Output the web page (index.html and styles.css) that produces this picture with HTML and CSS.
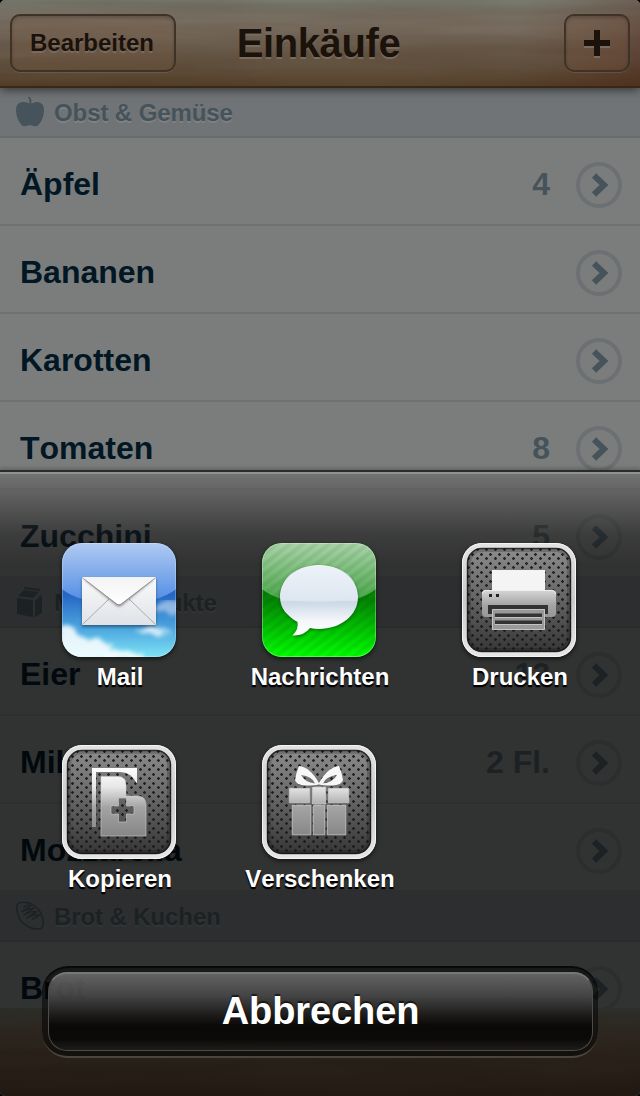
FILE: index.html
```html
<!DOCTYPE html>
<html lang="de">
<head>
<meta charset="utf-8">
<title>Einkäufe</title>
<link rel="stylesheet" href="styles.css">
</head>
<body>
<svg class="defs" width="0" height="0" aria-hidden="true">
  <defs>
    <filter id="grain" x="0" y="0" width="100%" height="100%" color-interpolation-filters="sRGB">
      <feTurbulence type="fractalNoise" baseFrequency="0.004 0.05" numOctaves="3" seed="8"/>
      <feColorMatrix values="0 0 0 0 0.2  0 0 0 0 0.1  0 0 0 0 0.02  1.4 0 0 0 -0.45"/>
    </filter>
    <linearGradient id="frame" x1="0" y1="0" x2="0" y2="1"><stop offset="0" stop-color="#e2e2e2"/><stop offset=".5" stop-color="#cbcbcb"/><stop offset="1" stop-color="#e6e6e6"/></linearGradient>
    <linearGradient id="plate" x1="0" y1="0" x2="0" y2="1"><stop offset="0" stop-color="#8c8c8c"/><stop offset=".5" stop-color="#636363"/><stop offset="1" stop-color="#363636"/></linearGradient>
    <pattern id="mesh" width="9" height="9" patternUnits="userSpaceOnUse">
      <path d="M0 2h3v1H0zM1 1h1v3H1zM5 6h3v1H5zM6 5h1v3H6z" fill="#181818" opacity=".9"/>
      <path d="M0 3h1v1H0zM2 3h1v1H2zM5 7h1v1H5zM7 7h1v1H7zM0 1h1v1H0zM2 1h1v1H2zM5 5h1v1H5zM7 5h1v1H7z" fill="#181818" opacity=".25"/>
    </pattern>
    <linearGradient id="silver" gradientUnits="userSpaceOnUse" x1="0" y1="22" x2="0" y2="92"><stop offset="0" stop-color="#fff"/><stop offset=".28" stop-color="#e8e8e8"/><stop offset=".58" stop-color="#a3a3a3"/><stop offset="1" stop-color="#858585"/></linearGradient>
    <linearGradient id="sky" x1="0" y1="0" x2="0" y2="1"><stop offset="0" stop-color="#3169cc"/><stop offset=".45" stop-color="#2566c4"/><stop offset=".75" stop-color="#4ca6df"/><stop offset="1" stop-color="#7fe3f4"/></linearGradient>
    <linearGradient id="skygloss" x1="0" y1="0" x2="0" y2="1"><stop offset="0" stop-color="#b1caf2"/><stop offset="1" stop-color="#4f8ce4"/></linearGradient>
    <linearGradient id="flap" x1="0" y1="0" x2="0" y2="1"><stop offset="0" stop-color="#f3f3f3"/><stop offset="1" stop-color="#fff"/></linearGradient>
    <linearGradient id="env" x1="0" y1="0" x2="0" y2="1"><stop offset="0" stop-color="#fafafa"/><stop offset="1" stop-color="#dfe3e8"/></linearGradient>
    <linearGradient id="green" x1="0" y1="0" x2="0" y2="1"><stop offset="0" stop-color="#057a05"/><stop offset=".5" stop-color="#048404"/><stop offset="1" stop-color="#00ff00"/></linearGradient>
    <linearGradient id="greengloss" x1="0" y1="0" x2="0" y2="1"><stop offset="0" stop-color="#a9d3a8"/><stop offset="1" stop-color="#45a545"/></linearGradient>
    <pattern id="stripes" width="8" height="8" patternUnits="userSpaceOnUse" patternTransform="rotate(-38)"><path d="M0 2h8" stroke="#000" stroke-opacity=".06" stroke-width="4"/></pattern>
    <linearGradient id="bubble" x1="0" y1="0" x2="0" y2="1"><stop offset="0" stop-color="#fff"/><stop offset=".5" stop-color="#dde6f0"/><stop offset=".52" stop-color="#cbd8e6"/><stop offset=".8" stop-color="#f5f7fb"/><stop offset="1" stop-color="#fff"/></linearGradient>
    <clipPath id="tile"><rect width="114" height="114" rx="20"/></clipPath>
    <filter id="soft"><feGaussianBlur stdDeviation="1.6"/></filter>
    <filter id="cloud" x="0" y="0" width="100%" height="100%" color-interpolation-filters="sRGB">
      <feTurbulence type="fractalNoise" baseFrequency=".07 .09" numOctaves="4" seed="3" result="n"/>
      <feDisplacementMap in="SourceGraphic" in2="n" scale="20" xChannelSelector="R" yChannelSelector="G"/>
      <feGaussianBlur stdDeviation="2"/>
    </filter>
    <symbol id="next" viewBox="0 0 46 46"><circle cx="23" cy="23" r="21" fill="none" stroke="#6c7073" stroke-width="4"/><path d="M18 13.500 28 23 18 32.500" fill="none" stroke="#46535b" stroke-width="6"/></symbol>
    <symbol id="metal" viewBox="0 0 114 114">
      <rect width="114" height="114" rx="20" fill="url(#frame)"/>
      <rect x=".5" y=".5" width="113" height="113" rx="19.500" fill="none" stroke="#f4f4f4"/>
      <rect x="5" y="5" width="104" height="104" rx="15" fill="url(#plate)"/>
      <rect x="5" y="5" width="104" height="104" rx="15" fill="url(#mesh)"/>
      <rect x="5.500" y="5.500" width="103" height="103" rx="14.500" fill="none" stroke="#111" stroke-opacity=".8" stroke-width="1.500"/>
      <rect x="7.500" y="7.500" width="99" height="99" rx="12.500" fill="none" stroke="#111" stroke-opacity=".22" stroke-width="3"/>
    </symbol>
  </defs>
</svg>

<div class="screen">
  <header class="bar">
    <svg class="wood" width="640" height="86"><rect width="640" height="86" filter="url(#grain)"/></svg>
    <button class="barbtn edit">Bearbeiten</button>
    <h1 class="title">Einkäufe</h1>
    <button class="barbtn add" aria-label="Hinzufügen"><svg width="28" height="30" viewBox="0 0 28 30"><path d="M1 15h26v4H1zM11 27h6v2h-6z" fill="#7a6d5f"/><path d="M11 1h6v10h10v6H17v10h-6V17H1v-6h10z" fill="#1b120b"/></svg></button>
  </header>

  <main class="list">
    <h2 class="section"><svg class="sicon" width="28" height="32" viewBox="0 0 28 32"><path d="M12 1l2 0q2 3 1.400 6.500Q19 5.500 22 6q6 1 6 8 0 9-6 15.500-3 1.500-8-.5-5 2-8 .500Q0 23 0 14 0 7 6 6q4-.5 7.500 1.500Q14 4 12 1z" fill="#46535a"/></svg><span>Obst &amp; Gemüse</span></h2>
    <div class="row"><span class="name">Äpfel</span><span class="qty">4</span><svg class="next"><use href="#next"/></svg></div>
    <div class="row"><span class="name">Bananen</span><svg class="next"><use href="#next"/></svg></div>
    <div class="row"><span class="name">Karotten</span><svg class="next"><use href="#next"/></svg></div>
    <div class="row"><span class="name">Tomaten</span><span class="qty">8</span><svg class="next"><use href="#next"/></svg></div>
    <div class="row"><span class="name">Zucchini</span><span class="qty">5</span><svg class="next"><use href="#next"/></svg></div>
    <h2 class="section"><svg class="sicon" width="28" height="32" viewBox="0 0 28 32"><path d="M1 12 17 14V31L1 28zM19 14l7-4v17l-7 4zM2 10 8 4 23 6 17 12zM25 8l1 1-6 4zM8 1l16 2v2L8 3z" fill="#46535a"/></svg><span>Milchprodukte</span></h2>
    <div class="row"><span class="name">Eier</span><span class="qty">12</span><svg class="next"><use href="#next"/></svg></div>
    <div class="row"><span class="name">Milch</span><span class="qty">2 Fl.</span><svg class="next"><use href="#next"/></svg></div>
    <div class="row"><span class="name">Mozzarella</span><svg class="next"><use href="#next"/></svg></div>
    <h2 class="section"><svg class="sicon" width="28" height="32" viewBox="0 0 28 32"><g fill="none" stroke="#46535a" stroke-width="1.500" stroke-linejoin="round"><path d="M1 8Q0 3 5 2.500 15 1 22 9q6 7 5 16 0 4-5 4Q12 29 5 21 1 15 1 8z"/><path d="M7 8q4-4 8-2.500L6 11.500q6-3 12-3.500L8 15q6-4 13-3.500L11 18q6-4 13-3l-8 4.500"/></g></svg><span>Brot &amp; Kuchen</span></h2>
    <div class="row"><span class="name">Brot</span><svg class="next"><use href="#next"/></svg></div>
  </main>
  <footer class="toolbar"><svg class="wood" width="640" height="88"><rect width="640" height="88" filter="url(#grain)"/></svg></footer>

  <section class="sheet">
    <div class="actions">
      <div class="action">
        <svg class="tile" viewBox="0 0 114 114"><g clip-path="url(#tile)">
          <rect width="114" height="114" fill="url(#sky)"/>
          <g filter="url(#cloud)" fill="#fff"><path d="M-5 86Q4 84 14 91q12 2 20 7 18 0 28 8 8 3 18 5v8H-5z" opacity=".85"/><ellipse cx="106" cy="65" rx="12" ry="8" opacity=".45"/><ellipse cx="93" cy="87" rx="17" ry="4" opacity=".75"/></g>
          <path d="M0 0h114v46Q98 60 57 60T0 46z" fill="url(#skygloss)"/></g>
          <rect x="20" y="36" width="74" height="48" fill="#123" opacity=".5" filter="url(#soft)"/>
          <rect x="20" y="34" width="74" height="48" fill="url(#env)"/>
          <path d="M20.500 81.500 47 56M93.500 81.500 67 56" stroke="#aaa" fill="none"/>
          <path d="M22 36 54 62q3 3 6 0L92 36z" fill="#333" opacity=".55" filter="url(#soft)"/>
          <path d="M20 34 54.500 60.500q2.500 2 5 0L94 34z" fill="url(#flap)"/><path d="M20 34.500 54.500 61q2.500 2 5 0L94 34.500" stroke="#888" stroke-width=".8" fill="none"/>
          <rect x=".5" y=".5" width="113" height="113" rx="19.500" fill="none" stroke="#fff" stroke-opacity=".25"/>
        </svg>
        <span class="label">Mail</span>
      </div>
      <div class="action">
        <svg class="tile" viewBox="0 0 114 114"><g clip-path="url(#tile)">
          <rect width="114" height="114" fill="url(#green)"/>
          <path d="M0 0h114v46Q98 60 57 60T0 46z" fill="url(#greengloss)"/>
          <rect width="114" height="114" fill="url(#stripes)"/></g>
          <path d="M57 23c22 0 39 14 39 32S79 87 57 87q-5 0-9-1-6 8-17 8 6-6 5-14C25 74 18 66 18 55c0-18 17-32 39-32z" fill="#030" opacity=".55" filter="url(#soft)"/>
          <path d="M57 22c22 0 39 14 39 32S79 86 57 86q-5 0-9-1-6 8-17.500 7.500Q37 86 35.500 79C25 73 18 65 18 54c0-18 17-32 39-32z" fill="url(#bubble)"/>
          <path d="M19 54Q57 64 95 54 95 23 57 23T19 54z" fill="#dfe8f3" opacity=".55"/>
          <rect x=".5" y=".5" width="113" height="113" rx="19.500" fill="none" stroke="#fff" stroke-opacity=".3"/>
        </svg>
        <span class="label">Nachrichten</span>
      </div>
      <div class="action">
        <svg class="tile" viewBox="0 0 114 114"><use href="#metal"/>
          <path d="M30 27h53v20H30z" fill="#f4f4f4"/>
          <path d="M24 47h66q4 0 4 4v19q0 4-4 4h-7v-3h3v-9H26v9h4v3h-6q-4 0-4-4V51q0-4 4-4z" fill="url(#silver)"/>
          <path d="M20.500 51q0-3.500 3.500-3.500h66q3.500 0 3.500 3.500" fill="none" stroke="#eee"/>
          <path d="M27 51h3v3h-3zM34 51h3v3h-3z" fill="#222"/><path d="M26 62h60v9h-3v-5H30v5h-4z" fill="#333"/>
          <path d="M30 66h53v21H30z" fill="#999"/>
          <path d="M33 70.500h47V74H33zM33 77.500h47V81H33z" fill="#333"/>
          <path d="M30.500 66.500h52v20h-52zM33 74.500h47M33 81.500h47" fill="none" stroke="#c4c4c4"/>
        </svg>
        <span class="label">Drucken</span>
      </div>
      <div class="action">
        <svg class="tile" viewBox="0 0 114 114"><use href="#metal"/>
          <path d="M30 23h45v15.500Q69 27 58 27H34v55h-4z" fill="url(#silver)"/>
          <path fill-rule="evenodd" d="M39 31.500h17q8 0 8 8V51h11q9 0 9 9v31H39zM56.500 53v8H49v8h7.500v8h8v-8H72v-8h-7.500v-8z" fill="url(#silver)" stroke="#ccc" stroke-width=".6"/>
        </svg>
        <span class="label">Kopieren</span>
      </div>
      <div class="action">
        <svg class="tile" viewBox="0 0 114 114"><use href="#metal"/>
          <path fill-rule="evenodd" d="M57 38Q48 22 37 21q-3 7-4 14 1 5 11 5.500 9 0 13-1 4 1 13 1 10-.5 11-5.500-1-7-4-14-11 1-20 17zM39 30q11 1 14 8.500-10-1-14-8.500zM75 30q-11 1-14 8.500 10-1 14-8.500z" fill="#f7f7f7"/>
          <path d="M27.300 43.300h20.500v14.400H27.300zM50.300 42h13.500v17H50.300zM66.300 43.300h20.500v14.400H66.300zM30.300 60.300h18.500v29.500H30.300zM51.300 60.300h11.500v29.500H51.300zM65.300 60.300h18.500v29.500H65.300z" fill="url(#silver)" stroke="#c8c8c8" stroke-width=".8"/>
        </svg>
        <span class="label">Verschenken</span>
      </div>
    </div>
    <div class="well"><button class="cancel">Abbrechen</button></div>
  </section>
</div>
</body>
</html>
```
FILE: styles.css
```css
* { box-sizing: border-box; }
body { margin: 0; background: #000; font-family: "Liberation Sans", Arial, sans-serif; font-weight: bold; font-kerning: none; }
button { font: inherit; margin: 0; padding: 0; }
.defs { position: absolute; }
.screen { position: relative; width: 640px; height: 1096px; display: flex; flex-direction: column; overflow: hidden; border-radius: 5px; background: #7b7d7c; }

.bar { position: relative; z-index: 1; flex: none; height: 88px; display: grid; grid-template-columns: 166px 1fr 66px; padding: 14px 10px 0; border-bottom: 2px solid #3d2711; background: linear-gradient(100deg, rgba(70,35,15,0) 80%, rgba(78,30,18,.35)), linear-gradient(#7a7d72, #7a7064 25%, #6a5c4c 58%, #56432d); box-shadow: 0 2px 9px rgba(0,0,0,.55); }
.wood { position: absolute; inset: 0; opacity: .22; }
.barbtn { position: relative; height: 58px; border: 2px solid #3f3226; border-radius: 10px; background: rgba(120,88,62,.25); box-shadow: inset 0 2px 3px rgba(40,25,15,.25), 0 1px 0 rgba(150,135,115,.25); color: #1b120b; text-shadow: 0 2px 0 #796b5d; }
.edit { padding-right: 2px; font-size: 24px; line-height: 54px; letter-spacing: 0; }
.add { display: flex; align-items: center; justify-content: center; padding-top: 2px; }
.title { position: relative; margin: 0 103px 0 0; text-align: center; font-size: 40px; line-height: 59px; letter-spacing: -.4px; color: #1b120b; text-shadow: 0 2px 0 #796b5d; }

.list { height: 920px; flex: none; overflow: hidden; }
.section { display: flex; align-items: center; height: 50px; margin: 0; padding: 2px 16px 0; border-bottom: 2px solid #686c6e; background: #707476; font-size: 24px; letter-spacing: -.1px; color: #46535a; text-shadow: 0 2px 0 #7d8183; }
.sicon { flex: none; margin: -2px 10px 0 0; }
.row { display: flex; align-items: center; height: 88px; padding: 7px 18px 0 20px; border-bottom: 2px solid #707271; background: #7b7d7c; font-size: 32px; color: #021724; }
.name { flex: 1; }
.qty { color: #46535a; }
.next { flex: none; width: 46px; height: 46px; margin-left: 26px; }
.toolbar { position: relative; flex: none; height: 88px; background: linear-gradient(#74776c, #71604d 30%, #675240 60%, #574330); }

.sheet { position: absolute; z-index: 2; left: 0; top: 470px; width: 640px; height: 626px; padding: 69px 20px 0; border-top: 2px solid #2b2b2b; background: linear-gradient(rgba(110,110,110,.6), rgba(62,62,62,.6) 32px, rgba(18,18,18,.6) 62px, rgba(0,0,0,.6) 92px); box-shadow: inset 0 2px 0 rgba(190,190,190,.4), 0 -2px 4px rgba(0,0,0,.2); }
.actions { display: grid; grid-template-columns: repeat(3, 200px); grid-auto-rows: 202px; padding-top: 2px; }
.action { display: flex; flex-direction: column; align-items: center; }
.tile { width: 114px; height: 114px; margin-right: 2px; filter: drop-shadow(0 2px 2px rgba(0,0,0,.6)); }
.label { margin-top: 6px; font-size: 24px; line-height: 28px; color: #fff; text-shadow: 0 2px 1px #000, 0 2px 1px #000; }
.well { width: 556px; height: 92px; margin: 19px 0 0 22px; padding: 6px 5px 0 6px; border-radius: 26px; background: rgba(0,0,0,.5); border-bottom: 2px solid rgba(110,105,95,.6); box-shadow: inset 0 2px 1px rgba(0,0,0,.7); }
.cancel { display: block; width: 545px; height: 79px; padding-bottom: 2px; border: 1px solid #4c4c4b; border-top: 2px solid #777; border-radius: 19px; background: linear-gradient(rgba(110,110,110,.86), rgba(76,76,76,.86) 28%, rgba(30,29,28,.86) 54%, rgba(9,8,6,.88) 68%, rgba(10,9,7,.9) 85%, rgba(30,29,27,.92)); font-size: 38px; line-height: 74px; letter-spacing: -.1px; color: #fff; text-shadow: 0 -2px 1px rgba(0,0,0,.6); }
```
